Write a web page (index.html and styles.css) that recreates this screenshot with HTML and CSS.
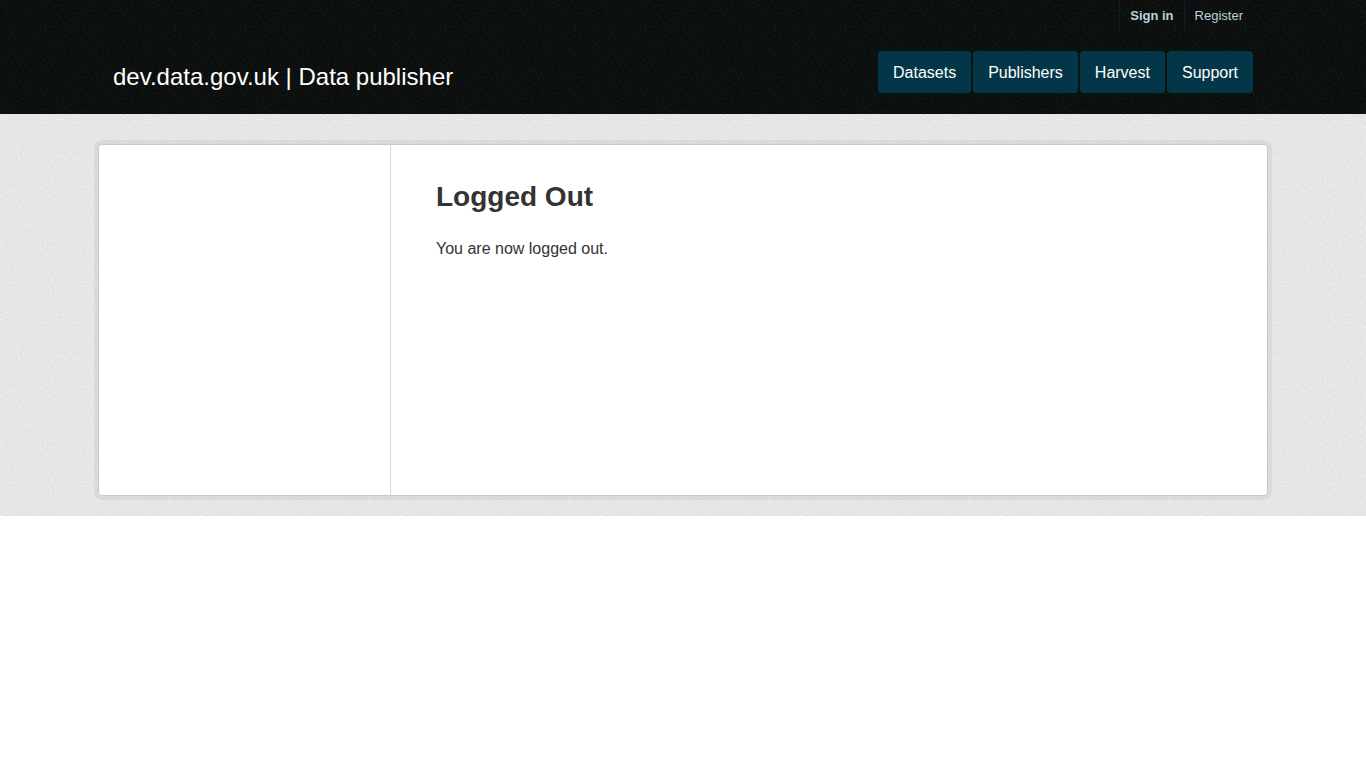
FILE: index.html
```
<!DOCTYPE html>
<html lang="en">
<head>
<meta charset="utf-8">
<meta name="viewport" content="width=device-width, initial-scale=1">
<title>Logged Out - Data publisher</title>
<link rel="stylesheet" href="styles.css">
</head>
<body>
<header class="masthead">
  <div class="container">
    <nav class="account" aria-label="Account">
      <a class="account-link sign-in" href="#">Sign in</a>
      <a class="account-link" href="#">Register</a>
    </nav>
    <div class="masthead-row">
      <a class="brand" href="#">dev.data.gov.uk | Data publisher</a>
      <nav class="site-nav" aria-label="Main">
        <a class="nav-link" href="#">Datasets</a>
        <a class="nav-link" href="#">Publishers</a>
        <a class="nav-link" href="#">Harvest</a>
        <a class="nav-link" href="#">Support</a>
      </nav>
    </div>
  </div>
</header>
<div class="page">
  <div class="wrapper">
    <aside class="sidebar"></aside>
    <main class="content">
      <h1 class="heading">Logged Out</h1>
      <p class="message">You are now logged out.</p>
    </main>
  </div>
</div>
</body>
</html>
```
FILE: styles.css
```
* {
  box-sizing: border-box;
}

body {
  margin: 0;
  background: #fff;
  color: #333;
  font: 16px/24px "Liberation Sans", Arial, sans-serif;
}

a {
  text-decoration: none;
}

/* Fine grain over the flat colour of the bands */
.masthead,
.page {
  background-image: url("data:image/svg+xml,%3Csvg xmlns='http://www.w3.org/2000/svg' width='100' height='100'%3E%3Cfilter id='n' x='0' y='0' width='100%25' height='100%25'%3E%3CfeTurbulence type='fractalNoise' baseFrequency='.6' numOctaves='2' stitchTiles='stitch'/%3E%3CfeColorMatrix values='0 0 0 0 1 0 0 0 0 1 0 0 0 0 1 3 0 0 0 -1.3'/%3E%3C/filter%3E%3Crect width='100' height='100' filter='url(%23n)' opacity='.4'/%3E%3C/svg%3E");
}

.masthead {
  background-color: #0a0d0c;
  background-blend-mode: soft-light;
  padding: 0 15px 21px;
}

.container {
  max-width: 1140px;
  margin: 0 auto;
}

.account {
  display: flex;
  justify-content: flex-end;
}

.account-link {
  padding: 0 10px;
  border-left: 1px solid #03232e;
  color: #b8d3dc;
  font-size: 13px;
  line-height: 31px;
}

.sign-in {
  font-weight: bold;
}

.masthead-row {
  display: flex;
  flex-wrap: wrap;
  justify-content: space-between;
  align-items: flex-end;
  padding-top: 20px;
}

.brand {
  color: #fff;
  font-size: 24px;
  line-height: 32px;
}

.site-nav {
  display: flex;
  flex-wrap: wrap;
  gap: 2px;
}

.nav-link {
  padding: 10px 15px 8px;
  border-radius: 4px;
  background: #033647;
  color: #fff;
}

.page {
  background-color: #e3e3e3;
  padding: 30px 15px 20px;
}

.wrapper {
  display: flex;
  max-width: 1170px;
  min-height: 352px;
  margin: 0 auto;
  border: 1px solid #c8c8c8;
  border-radius: 4px;
  background: #fff;
  box-shadow: 0 0 0 4px rgba(0, 0, 0, 0.05);
}

.sidebar {
  flex: 0 0 25%;
  border-right: 1px solid #d8d8d8;
}

.content {
  flex: 1;
  padding: 30px 45px;
}

.heading {
  margin: 0 0 18px;
  font-size: 28px;
  line-height: 44px;
}

.message {
  margin: 0;
}
```
